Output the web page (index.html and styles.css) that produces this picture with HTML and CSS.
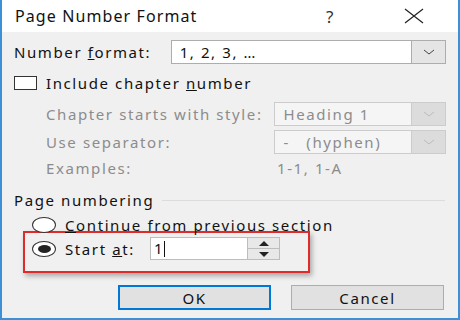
FILE: index.html
```html
<!DOCTYPE html>
<html lang="en">
<head>
    <meta charset="UTF-8">
    <title>Page Number Format</title>
    <link rel="stylesheet" href="styles.css">
</head>
<body>

    <div class="dialog">
        <div class="titlebar">
            <span class="title">Page Number Format</span>
            <span class="help">?</span>
            <span class="close">
                <svg width="20" height="16" viewBox="0 0 20 16"><path d="M1 1 L19 15 M19 1 L1 15" stroke="#222" stroke-width="1.2" fill="none"/></svg>
            </span>
        </div>

        <div class="content">
            <div class="row fmt-row">
                <span class="label fmt-label">Number <u>f</u>ormat:</span>
                <div class="combo fmt-combo">
                    <span class="combo-text">1, 2, 3, …</span>
                    <span class="combo-btn"><svg width="12" height="6" viewBox="0 0 12 6"><path d="M1 1 L6 5 L11 1" stroke="#444" fill="none"/></svg></span>
                </div>
            </div>

            <div class="row check-row">
                <span class="checkbox"></span>
                <span class="label">Include chapter <u>n</u>umber</span>
            </div>

            <div class="row sub-row chapter-row">
                <span class="label disabled sub-label">Chapter starts with style:</span>
                <div class="combo off-combo">
                    <span class="combo-text">Heading 1</span>
                    <span class="combo-btn"><svg width="12" height="6" viewBox="0 0 12 6"><path d="M1 1 L6 5 L11 1" stroke="#bbb" fill="none"/></svg></span>
                </div>
            </div>

            <div class="row sub-row sep-row">
                <span class="label disabled sub-label">Use separator:</span>
                <div class="combo off-combo">
                    <span class="combo-text">-&nbsp;&nbsp;&nbsp;(hyphen)</span>
                    <span class="combo-btn"><svg width="12" height="6" viewBox="0 0 12 6"><path d="M1 1 L6 5 L11 1" stroke="#bbb" fill="none"/></svg></span>
                </div>
            </div>

            <div class="row sub-row ex-row">
                <span class="label disabled sub-label">Examples:</span>
                <span class="label disabled ex-value">1-1, 1-A</span>
            </div>

            <div class="row group-row">
                <span class="label">Page numbering</span>
                <span class="group-line"></span>
            </div>

            <div class="row radio-row">
                <span class="radio"></span>
                <span class="label"><u>C</u>ontinue from previous section</span>
            </div>

            <div class="highlight-box">
                <div class="row start-row">
                    <span class="radio checked"><span class="dot"></span></span>
                    <span class="label start-label">Start <u>a</u>t:</span>
                    <div class="spin">
                        <span class="spin-text">1<span class="caret"></span></span>
                        <span class="spin-btns">
                            <span class="spin-up"><svg width="10" height="5" viewBox="0 0 10 5"><path d="M0 5 L5 0 L10 5 Z" fill="#222"/></svg></span>
                            <span class="spin-down"><svg width="10" height="5" viewBox="0 0 10 5"><path d="M0 0 L5 5 L10 0 Z" fill="#222"/></svg></span>
                        </span>
                    </div>
                </div>
            </div>

            <div class="buttons">
                <button class="btn ok">OK</button>
                <button class="btn">Cancel</button>
            </div>
        </div>
    </div>

</body>
</html>
```

FILE: styles.css
```css
body {
    margin: 0;
    font-family: "Noto Sans", "Open Sans", sans-serif;
    background: #ffffff;
}

.dialog {
    width: 460px;
    height: 320px;
    box-sizing: border-box;
    border-left: 2px solid #3d8fd8;
    border-right: 2px solid #3d8fd8;
    border-bottom: 2px solid #3d8fd8;
    background: #f0f0f0;
    overflow: hidden;
}

.titlebar {
    height: 32px;
    background: #ffffff;
    display: flex;
    align-items: center;
    color: #111;
}

.title {
    margin-left: 13px;
    font-size: 16px;
    letter-spacing: 1.1px;
    width: 311px;
}

.help {
    font-size: 17px;
    color: #333;
    width: 78px;
}

.close {
    display: flex;
}

.content {
    padding: 8px 12px 0 12px;
}

.row {
    display: flex;
    align-items: center;
}

.label {
    font-size: 15px;
    letter-spacing: 1.6px;
    color: #111;
    white-space: nowrap;
}

.disabled {
    color: #8c8c8c;
}

/* Number format */
.fmt-row {
    height: 24px;
}

.fmt-label {
    width: 157px;
}

.combo {
    display: flex;
    height: 24px;
    box-sizing: border-box;
    border: 1px solid #adadad;
    background: #ffffff;
}

.combo-text {
    flex: 1;
    font-size: 15px;
    letter-spacing: 1.6px;
    padding-left: 8px;
    line-height: 22px;
    color: #111;
    white-space: nowrap;
}

.combo-btn {
    width: 33px;
    border-left: 1px solid #adadad;
    background: #e5e5e5;
    display: flex;
    align-items: center;
    justify-content: center;
}

.fmt-combo {
    width: 276px;
}

/* Checkbox */
.check-row {
    margin-top: 6px;
    height: 26px;
}

.checkbox {
    width: 23px;
    height: 14px;
    box-sizing: border-box;
    border: 1px solid #333;
    background: #ffffff;
    margin-right: 9px;
}

/* Chapter options (disabled) */
.sub-row {
    padding-left: 32px;
}

.sub-label {
    width: 229px;
}

.chapter-row {
    margin-top: 6px;
    height: 24px;
}

.sep-row {
    margin-top: 4px;
    height: 24px;
}

.off-combo {
    width: 172px;
    border-color: #cccccc;
    background: #f5f5f5;
}

.off-combo .combo-text {
    color: #8c8c8c;
}

.off-combo .combo-btn {
    border-left-color: #cccccc;
    background: #dcdcdc;
}

.ex-row {
    margin-top: 4px;
    height: 20px;
}

.ex-value {
    padding-left: 2px;
}

/* Page numbering group */
.group-row {
    margin-top: 12px;
    height: 20px;
}

.group-line {
    flex: 1;
    height: 1px;
    background: #dcdcdc;
    margin-left: 8px;
    margin-right: 1px;
}

.radio {
    width: 24px;
    height: 16px;
    box-sizing: border-box;
    border: 1px solid #333;
    border-radius: 50%;
    background: #ffffff;
    margin-right: 9px;
    display: flex;
    align-items: center;
    justify-content: center;
}

.dot {
    width: 13px;
    height: 8px;
    border-radius: 50%;
    background: #222;
}

.radio-row {
    margin-top: 7px;
    height: 16px;
    padding-left: 18px;
}

.highlight-box {
    margin-top: -2px;
    margin-left: 9px;
    width: 287px;
    height: 42px;
    box-sizing: border-box;
    border: 2px solid #e02b2b;
    box-shadow: 2px 3px 5px rgba(0, 0, 0, 0.3);
    padding: 4px 0 0 7px;
}

.start-row {
    height: 23px;
}

.start-label {
    width: 85px;
}

.spin {
    display: flex;
    height: 23px;
}

.spin-text {
    width: 98px;
    box-sizing: border-box;
    border: 1px solid #bdbdbd;
    background: #ffffff;
    font-size: 15px;
    line-height: 21px;
    padding-left: 3px;
    color: #111;
    display: flex;
    align-items: center;
}

.caret {
    width: 1px;
    height: 16px;
    background: #111;
    margin-left: 1px;
}

.spin-btns {
    width: 32px;
    display: flex;
    flex-direction: column;
    border: 1px solid #bdbdbd;
    border-left: none;
    box-sizing: border-box;
    background: #e8e8e8;
}

.spin-up,
.spin-down {
    flex: 1;
    display: flex;
    align-items: center;
    justify-content: center;
}

.spin-up {
    border-bottom: 1px solid #bdbdbd;
}

/* Buttons */
.buttons {
    display: flex;
    gap: 20px;
    margin-top: 12px;
    padding-left: 104px;
}

.btn {
    width: 153px;
    height: 25px;
    box-sizing: border-box;
    border: 1px solid #adadad;
    background: #e1e1e1;
    font-family: "Noto Sans", "Open Sans", sans-serif;
    font-size: 15px;
    letter-spacing: 1.6px;
    color: #111;
    padding: 0;
}

.ok {
    border: 2px solid #0078d7;
}
```
